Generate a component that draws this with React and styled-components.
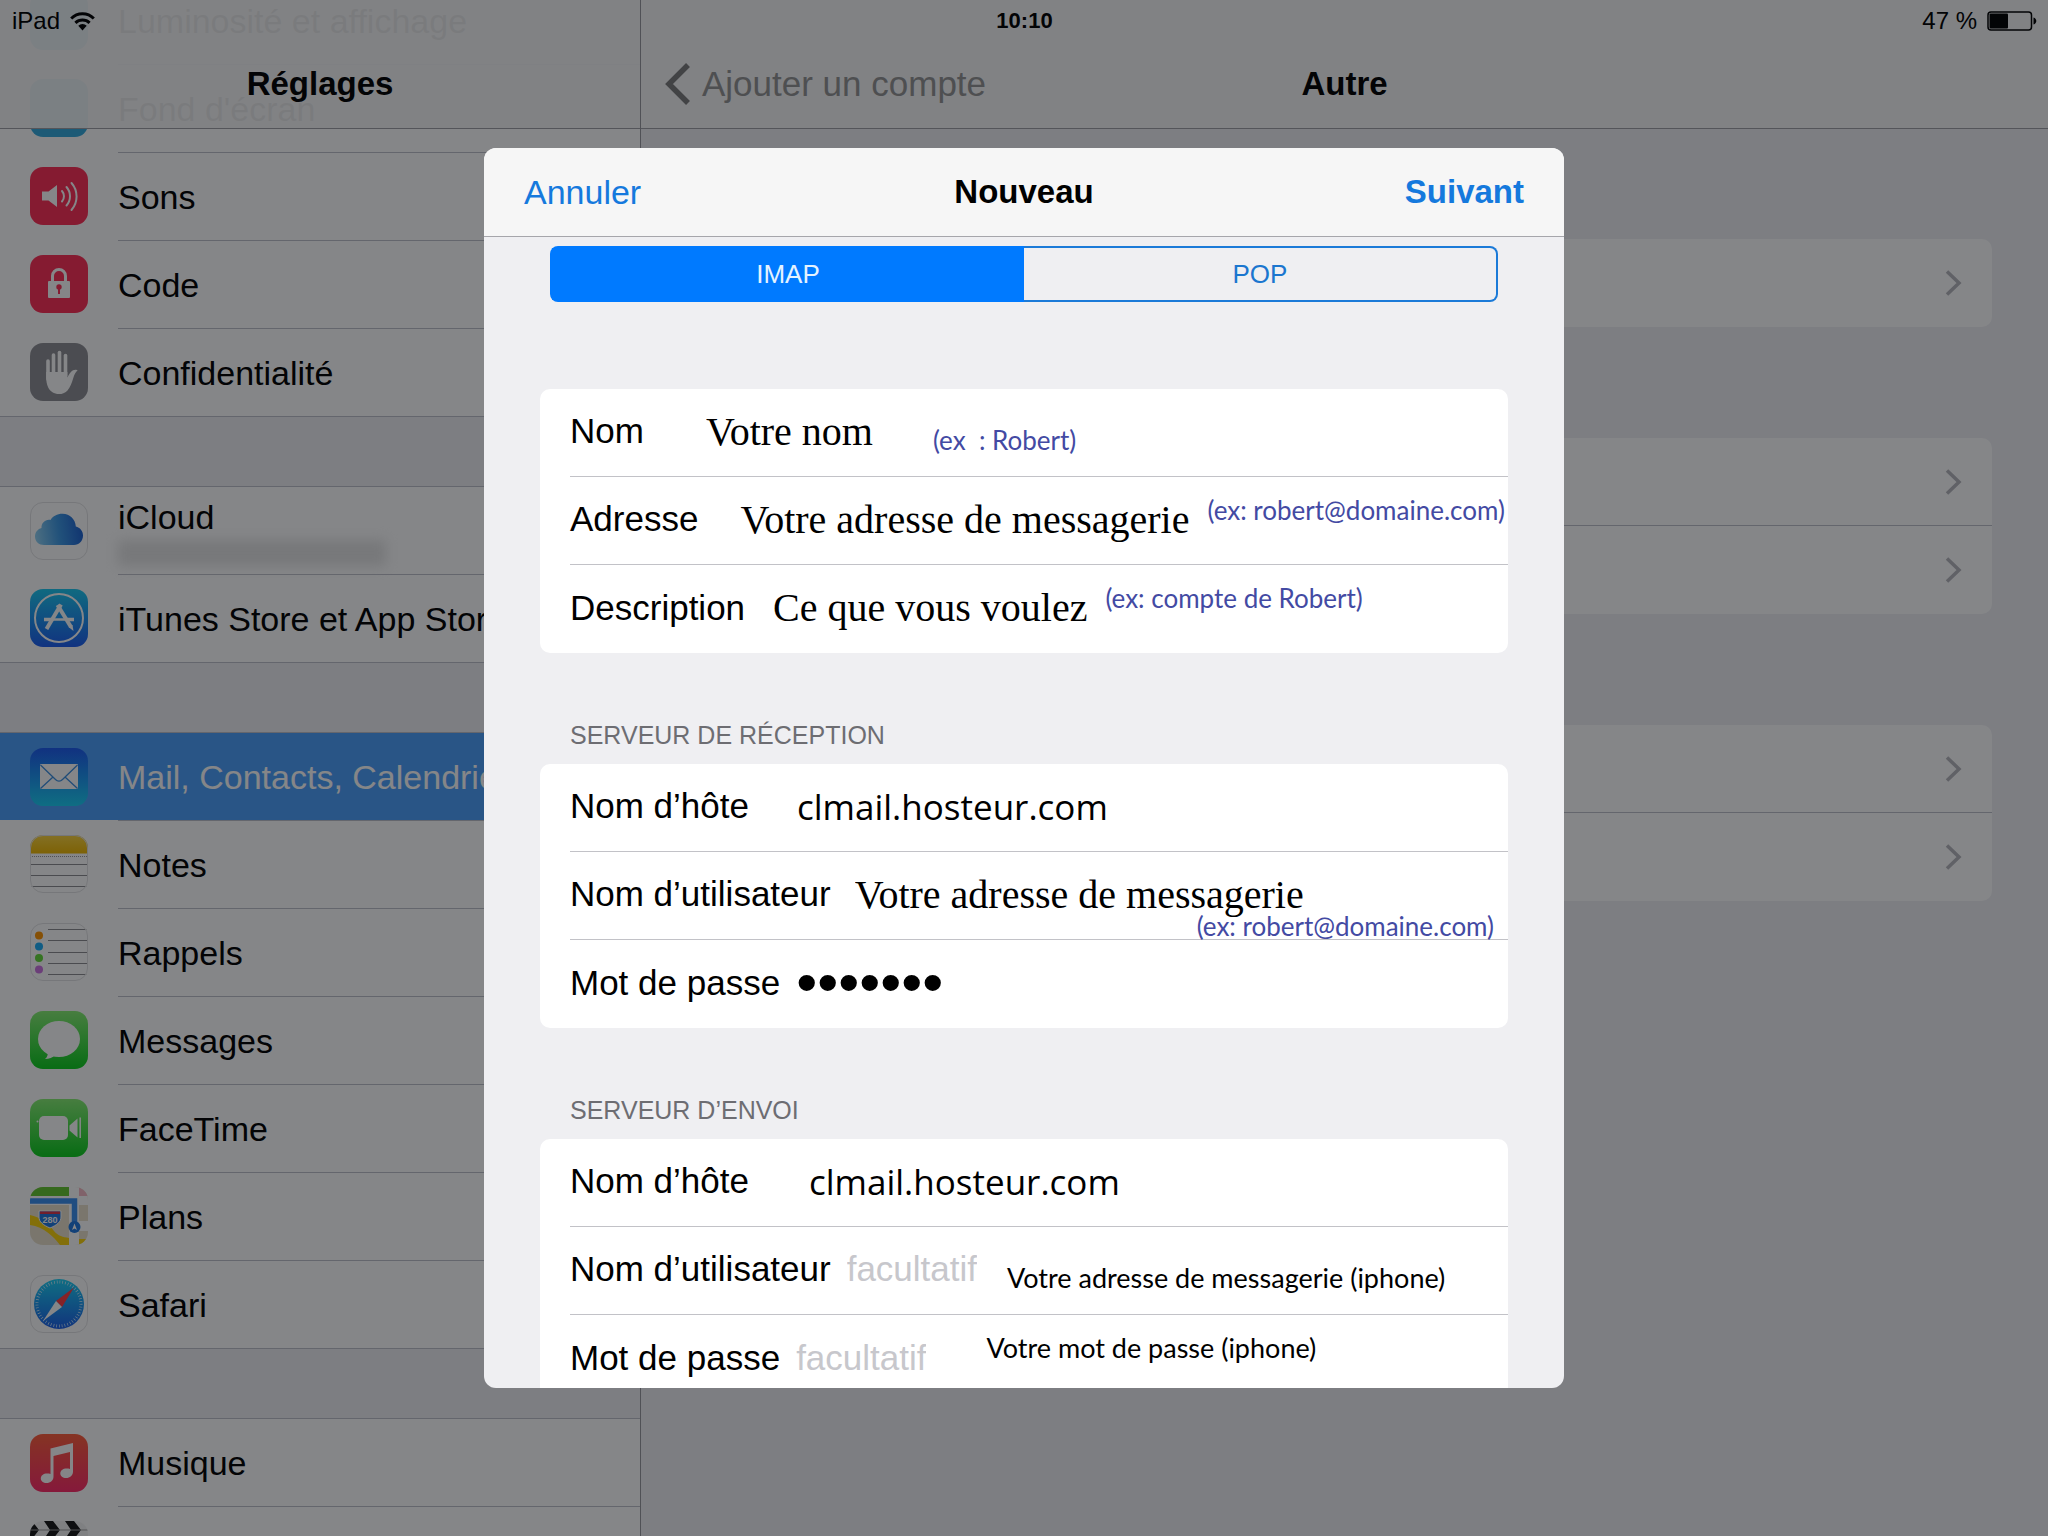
// App.jsx
import React, { useState } from 'react';
import styled, { createGlobalStyle, css } from 'styled-components';

const GlobalStyle = createGlobalStyle`
  *, *::before, *::after {
    box-sizing: border-box;
  }
  html, body {
    margin: 0;
    height: 100%;
    overflow: hidden;
    background: #efeff4;
    font-family: 'Liberation Sans', Arial, sans-serif;
  }
  ul {
    list-style: none;
    margin: 0;
    padding: 0;
  }
  button, input {
    font-family: inherit;
  }
`;

const Screen = styled.div`
  position: relative;
  display: grid;
  grid-template-columns: 31.25% 1fr;
  height: 100vh;
  overflow: hidden;
  color: #000;
`;

/* ---------- status bar ---------- */

const StatusBar = styled.div`
  position: absolute;
  top: 0;
  left: 0;
  right: 0;
  height: 42px;
  padding: 0 11px 0 12px;
  display: grid;
  grid-template-columns: 1fr auto 1fr;
  align-items: center;
  font-size: 24px;
  z-index: 2;
`;

const StatusSide = styled.div`
  display: flex;
  align-items: center;
  gap: 10px;
  white-space: pre;
  justify-content: ${props => (props.$end ? 'flex-end' : 'flex-start')};

  svg {
    display: block;
  }
`;

const Clock = styled.div`
  font-size: 22px;
  font-weight: 700;
`;

/* ---------- bars ---------- */

const NavBar = styled.header`
  height: 129px;
  padding: 40px 24px 0;
  display: grid;
  grid-template-columns: 1fr auto 1fr;
  align-items: center;
  border-bottom: 1px solid #a0a0a6;
  background: rgba(247, 247, 247, 0.95);

  h1 {
    grid-column: 2;
    margin: 0;
    font-size: 33px;
    font-weight: 700;
  }
`;

const FloatingNavBar = styled(NavBar)`
  position: absolute;
  top: 0;
  left: 0;
  right: 0;
  z-index: 1;
`;

const BackButton = styled.button`
  justify-self: start;
  display: flex;
  align-items: center;
  gap: 12px;
  padding: 0;
  border: 0;
  background: none;
  font-size: 35px;
  color: #949494;
`;

/* ---------- sidebar ---------- */

const Sidebar = styled.aside`
  position: relative;
  overflow: hidden;
`;

const SettingsList = styled.nav`
  margin-top: -24px;
`;

const Group = styled.ul`
  background: #fff;
  border-top: 1px solid #bfc0ca;
  border-bottom: 1px solid #bfc0ca;

  & + & {
    margin-top: 69px;
  }
`;

const SettingRow = styled.a`
  display: flex;
  align-items: stretch;
  height: 88px;
  padding-left: 30px;
  gap: 30px;
  color: ${props => (props.$active ? '#fff' : '#000')};
  background: ${props => (props.$active ? '#4c9ffb' : 'transparent')};
  font-size: 34px;
  text-decoration: none;
  white-space: nowrap;

  li:first-child > & {
    height: 87px;
  }

  svg {
    align-self: center;
    flex: none;
  }
`;

const SettingText = styled.span`
  flex: 1;
  display: flex;
  flex-direction: column;
  justify-content: center;
  padding-top: 2px;
  border-top: 1px solid #bfc0ca;

  li:first-child & {
    border-top: 0;
  }
`;

const HiddenAccount = styled.span`
  width: 268px;
  height: 26px;
  margin-top: 3px;
  background: #e4e4e4;
  filter: blur(6px);
`;

/* ---------- detail ---------- */

const Detail = styled.main`
  border-left: 1px solid #98989e;
`;

const DetailBody = styled.div`
  display: flex;
  flex-direction: column;
  gap: 111px;
  padding: 110px 56px;
`;

const DetailCard = styled.ul`
  background: #fff;
  border-radius: 10px;
`;

const DetailRow = styled.li`
  height: 88px;
  margin-left: 30px;
  padding-right: 30px;
  display: flex;
  align-items: center;
  justify-content: flex-end;
  border-bottom: 1px solid #bfc0ca;

  &:last-child {
    border-bottom: 0;
  }
`;

/* ---------- modal ---------- */

const Overlay = styled.div`
  position: absolute;
  inset: 0;
  z-index: 3;
  display: flex;
  justify-content: center;
  padding: 148px 24px;
  background: rgba(6, 8, 12, 0.49);
`;

const Modal = styled.section`
  display: flex;
  flex-direction: column;
  width: 100%;
  max-width: 1080px;
  overflow: hidden;
  border-radius: 12px;
  background: #efeff2;
`;

const ModalHeader = styled.header`
  flex: none;
  height: 89px;
  padding: 0 40px;
  display: grid;
  grid-template-columns: 1fr auto 1fr;
  align-items: center;
  background: #f6f6f6;
  border-bottom: 1px solid #a6a6ab;

  h2 {
    margin: 0;
    font-size: 33px;
    font-weight: 700;
  }
`;

const HeaderButton = styled.button`
  justify-self: ${props => (props.$primary ? 'end' : 'start')};
  padding: 0;
  border: 0;
  background: none;
  font-size: ${props => (props.$primary ? '33px' : '34px')};
  font-weight: ${props => (props.$primary ? 700 : 400)};
  color: #1579dd;
`;

const ModalBody = styled.form`
  flex: 1;
  min-height: 0;
  overflow: hidden;
  padding: 9px 56px 0;
`;

const Segmented = styled.div`
  display: grid;
  grid-template-columns: 1fr 1fr;
  height: 56px;
  margin: 0 10px 87px;
`;

const Segment = styled.button`
  padding: 0;
  border: 2px solid ${props => (props.$on ? '#007aff' : '#1b7ad8')};
  font-size: 26px;
  color: ${props => (props.$on ? '#e4f3ff' : '#1b76cf')};
  background: ${props => (props.$on ? '#007aff' : 'transparent')};

  &:first-child {
    border-right: 0;
    border-radius: 8px 0 0 8px;
  }

  &:last-child {
    border-left: 0;
    border-radius: 0 8px 8px 0;
  }
`;

const SectionTitle = styled.h3`
  display: flex;
  align-items: flex-end;
  height: 111px;
  margin: 0;
  padding: 0 30px 14px;
  font-size: 25px;
  line-height: 30px;
  font-weight: 400;
  color: #6d6d72;
`;

const Card = styled.div`
  overflow: hidden;
  border-radius: 10px;
  background: #fff;
`;

const FieldRow = styled.div`
  position: relative;
  display: flex;
  align-items: center;
  height: 88px;
  margin-left: 30px;
  padding-bottom: 3px;
  border-bottom: 1px solid #c2c2c7;
  white-space: nowrap;

  &:last-child {
    border-bottom: 0;
  }

  label {
    font-size: 35px;
  }
`;

const valueFonts = {
  serif: css`
    font-family: 'Liberation Serif', 'Times New Roman', serif;
    font-size: 40px;
  `,
  host: css`
    font-family: 'Open Sans', sans-serif;
    font-size: 35px;
  `,
  dots: css`
    font-size: 60px;
  `,
  plain: css`
    font-size: 35px;
  `,
};

const Field = styled.input`
  field-sizing: content;
  height: 72px;
  margin-left: ${props => props.$gap}px;
  padding: 0;
  border: 0;
  outline: 0;
  background: none;
  color: #000;
  ${props => valueFonts[props.$font]}

  &::placeholder {
    color: #c7c7cc;
    opacity: 1;
  }
`;

const notePlaces = {
  high: css`
    align-self: flex-start;
    padding-top: 18px;
  `,
  low: css`
    align-self: flex-end;
    padding-bottom: 18px;
  `,
  over: css`
    position: absolute;
    right: 14px;
    bottom: -2px;
  `,
};

const Note = styled.span`
  margin-left: ${props => props.$gap}px;
  font-family: Lato, 'Open Sans', sans-serif;
  font-size: ${props => (props.$dark ? '27px' : '26px')};
  line-height: 30px;
  color: ${props => (props.$dark ? '#000' : '#434aa3')};
  white-space: pre;
  ${props => notePlaces[props.$place]}
`;

/* ---------- icons ---------- */

const AppIcon = ({ id, from, to, border, children }) => (
  <svg width="58" height="58" viewBox="0 0 58 58" aria-hidden="true">
    <defs>
      <linearGradient id={`${id}-bg`} x1="0" y1="0" x2="0" y2="1">
        <stop offset="0" stopColor={from} />
        <stop offset="1" stopColor={to || from} />
      </linearGradient>
      <clipPath id={`${id}-clip`}>
        <rect width="58" height="58" rx="13" />
      </clipPath>
    </defs>
    <g clipPath={`url(#${id}-clip)`}>
      <rect width="58" height="58" fill={`url(#${id}-bg)`} />
      {children}
    </g>
    {border && <rect x="0.5" y="0.5" width="57" height="57" rx="12.5" fill="none" stroke="#e2e2e4" />}
  </svg>
);

const BrightnessIcon = () => <AppIcon id="brightness" from="#2aa5e5" />;

const WallpaperIcon = () => <AppIcon id="wallpaper" from="#34aadc" />;

const SoundIcon = () => (
  <AppIcon id="sound" from="#ff2d55">
    <path d="M12 24.500h6.500L27 18v22l-8.500-6.500H12z" fill="#fff" />
    <g fill="none" stroke="#fff" strokeWidth="2" strokeLinecap="round">
      <path d="M32 24a8 8 0 0 1 0 10.500" />
      <path d="M36.500 20a14 14 0 0 1 0 18.500" />
      <path d="M41.500 16a20.500 20.500 0 0 1 0 27" />
    </g>
  </AppIcon>
);

const LockIcon = () => (
  <AppIcon id="lock" from="#ff2d55">
    <path d="M22.500 27v-6a6.500 6.500 0 0 1 13 0v6" fill="none" stroke="#fff" strokeWidth="3" />
    <rect x="18" y="26" width="22" height="17" rx="1" fill="#fff" />
    <circle cx="29" cy="32" r="2.700" fill="#ff2d55" />
    <path d="M28 32h2v7h-2z" fill="#ff2d55" />
  </AppIcon>
);

const HandIcon = () => (
  <AppIcon id="hand" from="#8e8e93">
    <g stroke="#fff" strokeWidth="3.600" strokeLinecap="round">
      <path d="M18 18v18" />
      <path d="M23.500 12v20" />
      <path d="M29.500 9.500v22" />
      <path d="M35.500 12.500v20" />
    </g>
    <path
      d="M16.200 29h21.200v5.500c1.500-3 3.200-6 5.600-7.200 1.800-.9 4-.8 4.600.2-2 1.500-3.200 4-4.300 7.500-1.600 5-3 9.500-6 12.700-2.500 2.600-5 3.300-8.300 3.300-5 0-8.800-2.500-10.800-6.500-1.500-3.200-2-6.500-2-10z"
      fill="#fff"
    />
  </AppIcon>
);

const CloudIcon = () => (
  <AppIcon id="cloud" from="#fff" border>
    <defs>
      <linearGradient id="cloud-fill" x1="0" y1="0.600" x2="1" y2="0.500">
        <stop offset="0" stopColor="#8fd0f2" />
        <stop offset="0.500" stopColor="#3c98e4" />
        <stop offset="1" stopColor="#1b5fd0" />
      </linearGradient>
    </defs>
    <path
      d="M14 43C9 43 5 39.500 5 34.500c0-4.500 3-7.600 6.500-8.500-.3-5 4-9 9-8 2.500-4 7-6.300 12-6.200 7.500.2 13 5.700 13.300 12.700C50 25.500 53 29 53 33.500c0 5.500-4 9.500-9 9.500z"
      fill="url(#cloud-fill)"
    />
  </AppIcon>
);

const StoreIcon = () => (
  <AppIcon id="store" from="#1bc8ef" to="#1c5cf0">
    <g fill="none" stroke="#fff">
      <circle cx="29" cy="29" r="24" strokeWidth="2" />
      <path d="M31 15.500L16.500 40" strokeWidth="4" />
      <path d="M27.500 16l13.500 22" strokeWidth="4" />
      <path d="M14 30.500h8M36 30.500h8" strokeWidth="3.500" />
      <path d="M22 30.500h14" strokeWidth="2.500" />
    </g>
    <path d="M38.500 38l4-2 1 6z" fill="#fff" />
  </AppIcon>
);

const MailIcon = () => (
  <AppIcon id="mail" from="#1c5af0" to="#19d0f5">
    <rect x="10" y="16" width="38" height="25" rx="1" fill="#fff" />
    <g fill="none" stroke="#3c8fe0" strokeWidth="1.300">
      <path d="M10.500 17l15 14.500c2 2 5 2 7 0L47.500 17" />
      <path d="M10.500 40.500l12.500-11.500M47.500 40.500L35 29" />
    </g>
  </AppIcon>
);

const NotesIcon = () => (
  <AppIcon id="notes" from="#fff" border>
    <defs>
      <linearGradient id="notes-top" x1="0" y1="0" x2="0" y2="1">
        <stop offset="0" stopColor="#fcd53f" />
        <stop offset="1" stopColor="#f0b800" />
      </linearGradient>
    </defs>
    <rect width="58" height="18.500" fill="url(#notes-top)" />
    <path d="M0 21.500h58" stroke="#999" strokeDasharray="1 1" />
    <path d="M0 29.500h58M0 40.500h58M0 51.500h58" stroke="#8c8c90" />
  </AppIcon>
);

const RemindersIcon = () => (
  <AppIcon id="reminders" from="#fff" border>
    <circle cx="9" cy="12.500" r="4" fill="#ff9500" />
    <circle cx="9" cy="23.500" r="4" fill="#1badf8" />
    <circle cx="9" cy="35" r="4" fill="#63da38" />
    <circle cx="9" cy="46.500" r="4" fill="#cc73e1" />
    <path d="M18 6.500h40M18 17.500h40M18 29.500h40M18 40.500h40M18 51.500h40" stroke="#8c8c90" />
  </AppIcon>
);

const MessagesIcon = () => (
  <AppIcon id="messages" from="#86ee72" to="#0bcd1c">
    <ellipse cx="29" cy="28" rx="21" ry="18" fill="#fff" />
    <path d="M18 40c0 3.500-.5 6-3 8 4 0 8-1.500 10-4z" fill="#fff" />
  </AppIcon>
);

const FaceTimeIcon = () => (
  <AppIcon id="facetime" from="#86ee72" to="#0bcd1c">
    <rect x="9" y="17" width="29" height="24" rx="5" fill="#fff" />
    <path d="M39.500 26.500L47.500 19.500v19l-8-7z" fill="#fff" />
    <path d="M50.200 18.500v20.500" stroke="#fff" strokeWidth="1.500" />
    <circle cx="7.500" cy="22.500" r="1" fill="#fff" />
  </AppIcon>
);

const MapsIcon = () => (
  <AppIcon id="maps" from="#e9e0cb">
    <path d="M0 28c10 2 18 8 24 16 4 5 9 6 15 7v7H30C24 50 14 40 0 38z" fill="#fbd309" />
    <rect width="39" height="9" fill="#64c62f" />
    <rect y="9" width="58" height="9" fill="#fff" />
    <rect x="39" width="10" height="58" fill="#fff" />
    <rect x="49" width="9" height="9" fill="#f6b9c4" />
    <rect x="49" y="34" width="9" height="10" fill="#fff" />
    <rect x="49" y="52" width="9" height="6" fill="#fbd309" />
    <path d="M0 14h44.500v26" fill="none" stroke="#3a8ff0" strokeWidth="5.500" />
    <path d="M9 24h22v6c0 5-4 8-11 11-7-3-11-6-11-11z" fill="#1f78e0" stroke="#fff" strokeWidth="1" />
    <path d="M10 24.500h20v2.500H10z" fill="#d9364c" />
    <text x="20" y="35.500" fontSize="9" fontWeight="700" fill="#fff" textAnchor="middle">
      280
    </text>
    <circle cx="44.500" cy="40" r="6" fill="#1f78e0" />
    <path d="M44.500 36.500l2.500 6.500-2.500-1.500-2.500 1.500z" fill="#fff" />
  </AppIcon>
);

const SafariIcon = () => (
  <AppIcon id="safari" from="#fff" border>
    <defs>
      <linearGradient id="safari-dial" x1="0" y1="0" x2="0" y2="1">
        <stop offset="0" stopColor="#19d0f5" />
        <stop offset="1" stopColor="#1d5fe8" />
      </linearGradient>
    </defs>
    <circle cx="29" cy="29" r="25" fill="url(#safari-dial)" />
    <circle cx="29" cy="29" r="22" fill="none" stroke="#d8f0ff" strokeWidth="3" strokeDasharray="0.700 2.100" />
    <path d="M44 12.500L26 26l6 6z" fill="#ff3b41" />
    <path d="M13 46l13-20 6 6z" fill="#fff" />
  </AppIcon>
);

const MusicIcon = () => (
  <AppIcon id="music" from="#ff5e3a" to="#ff2a68">
    <path
      d="M20.500 14.500L43 9v28.500c0 4-3 6.500-7 6.500-3.300 0-5.700-1.800-5.700-4.500 0-3 2.700-5 6.200-5 1.500 0 2.500.1 3.500.4V18l-16.500 4v20.500c0 4-3 6.500-7 6.500-3.300 0-5.700-1.800-5.700-4.500 0-3 2.700-5 6.200-5 1.500 0 2.500.1 3.500.4z"
      fill="#fff"
    />
  </AppIcon>
);

const VideosIcon = () => (
  <AppIcon id="videos" from="#f4f4f4">
    {[7, 28, 49, 70].map(x => (
      <path key={x} d={`M${x - 14} 0h9l7 9-7 9h-9l6-9z`} fill="#161616" />
    ))}
    <path d="M0 9h58" stroke="#999" />
    <rect y="18" width="58" height="40" fill="#161616" />
  </AppIcon>
);

const WifiIcon = () => (
  <svg width="25" height="19" viewBox="0 0 25 19" aria-hidden="true">
    <g fill="none" stroke="#000" strokeWidth="3">
      <path d="M1.200 6.500a16 16 0 0 1 22.600 0" />
      <path d="M5.400 10.800a10.200 10.200 0 0 1 14.200 0" />
    </g>
    <path d="M12.500 18.500l-4.200-4.700a6 6 0 0 1 8.400 0z" fill="#000" />
  </svg>
);

const BatteryIcon = () => (
  <svg width="50" height="20" viewBox="0 0 50 20" aria-hidden="true">
    <rect x="1" y="1" width="43.500" height="18" rx="3" fill="none" stroke="#000" strokeWidth="1.500" />
    <rect x="2.500" y="2.500" width="18.500" height="15" rx="1" fill="#000" />
    <path d="M46.500 6.500c2 .6 2.800 2 2.800 3.500s-.8 2.900-2.800 3.500z" fill="#000" />
  </svg>
);

const BackChevron = () => (
  <svg width="25" height="42" viewBox="0 0 25 42" aria-hidden="true">
    <path d="M23 2L4 21l19 19" fill="none" stroke="#7d7d7d" strokeWidth="5.500" />
  </svg>
);

const RowChevron = () => (
  <svg width="17" height="26" viewBox="0 0 17 26" aria-hidden="true">
    <path d="M2 1.500L14 13 2 24.500" fill="none" stroke="#b6b6bd" strokeWidth="3.500" />
  </svg>
);

/* ---------- data ---------- */

const settings = [
  [
    { label: 'Luminosité et affichage', icon: BrightnessIcon },
    { label: "Fond d'écran", icon: WallpaperIcon },
    { label: 'Sons', icon: SoundIcon },
    { label: 'Code', icon: LockIcon },
    { label: 'Confidentialité', icon: HandIcon },
  ],
  [
    { label: 'iCloud', icon: CloudIcon, account: true },
    { label: 'iTunes Store et App Store', icon: StoreIcon },
  ],
  [
    { label: 'Mail, Contacts, Calendriers', icon: MailIcon, active: true },
    { label: 'Notes', icon: NotesIcon },
    { label: 'Rappels', icon: RemindersIcon },
    { label: 'Messages', icon: MessagesIcon },
    { label: 'FaceTime', icon: FaceTimeIcon },
    { label: 'Plans', icon: MapsIcon },
    { label: 'Safari', icon: SafariIcon },
  ],
  [
    { label: 'Musique', icon: MusicIcon },
    { label: '', icon: VideosIcon },
  ],
];

const sections = [
  {
    fields: [
      { id: 'name', label: 'Nom', value: 'Votre nom', font: 'serif', gap: 62, note: '(ex  : Robert)', place: 'low', noteGap: 60 },
      { id: 'address', label: 'Adresse', value: 'Votre adresse de messagerie', font: 'serif', gap: 42, note: '(ex: robert@domaine.com)', place: 'high', noteGap: 18 },
      { id: 'description', label: 'Description', value: 'Ce que vous voulez', font: 'serif', gap: 28, note: '(ex: compte de Robert)', place: 'high', noteGap: 18 },
    ],
  },
  {
    title: 'SERVEUR DE RÉCEPTION',
    fields: [
      { id: 'in-host', label: 'Nom d’hôte', value: 'clmail.hosteur.com', font: 'host', gap: 48 },
      { id: 'in-user', label: 'Nom d’utilisateur', value: 'Votre adresse de messagerie', font: 'serif', gap: 24, note: '(ex: robert@domaine.com)', place: 'over' },
      { id: 'in-pass', label: 'Mot de passe', value: 'robert1', type: 'password', font: 'dots', gap: 16 },
    ],
  },
  {
    title: 'SERVEUR D’ENVOI',
    fields: [
      { id: 'out-host', label: 'Nom d’hôte', value: 'clmail.hosteur.com', font: 'host', gap: 60 },
      { id: 'out-user', label: 'Nom d’utilisateur', placeholder: 'facultatif', font: 'plain', gap: 16, note: 'Votre adresse de messagerie (iphone)', place: 'low', noteGap: 30, dark: true },
      { id: 'out-pass', label: 'Mot de passe', type: 'password', placeholder: 'facultatif', font: 'plain', gap: 16, note: 'Votre mot de passe (iphone)', place: 'high', noteGap: 60, dark: true },
    ],
  },
];

const detailCards = [1, 2, 2];

const App = () => {
  const [protocol, setProtocol] = useState('IMAP');

  return (
    <>
      <GlobalStyle />
      <Screen>
        <StatusBar>
          <StatusSide>
            iPad
            <WifiIcon />
          </StatusSide>
          <Clock>10:10</Clock>
          <StatusSide $end>
            47 %
            <BatteryIcon />
          </StatusSide>
        </StatusBar>

        <Sidebar>
          <FloatingNavBar>
            <h1>Réglages</h1>
          </FloatingNavBar>
          <SettingsList>
            {settings.map((group, index) => (
              <Group key={index}>
                {group.map(({ label, icon: Icon, account, active }) => (
                  <li key={label}>
                    <SettingRow href="#" $active={active}>
                      <Icon />
                      <SettingText>
                        {label}
                        {account && <HiddenAccount />}
                      </SettingText>
                    </SettingRow>
                  </li>
                ))}
              </Group>
            ))}
          </SettingsList>
        </Sidebar>

        <Detail>
          <NavBar>
            <BackButton type="button">
              <BackChevron />
              Ajouter un compte
            </BackButton>
            <h1>Autre</h1>
          </NavBar>
          <DetailBody>
            {detailCards.map((count, index) => (
              <DetailCard key={index}>
                {Array.from({ length: count }, (_, row) => (
                  <DetailRow key={row}>
                    <RowChevron />
                  </DetailRow>
                ))}
              </DetailCard>
            ))}
          </DetailBody>
        </Detail>

        <Overlay>
          <Modal role="dialog" aria-labelledby="modal-title">
            <ModalHeader>
              <HeaderButton type="button">Annuler</HeaderButton>
              <h2 id="modal-title">Nouveau</h2>
              <HeaderButton type="button" $primary>Suivant</HeaderButton>
            </ModalHeader>
            <ModalBody>
              <Segmented>
                {['IMAP', 'POP'].map(name => (
                  <Segment
                    key={name}
                    type="button"
                    aria-pressed={protocol === name}
                    $on={protocol === name}
                    onClick={() => setProtocol(name)}
                  >
                    {name}
                  </Segment>
                ))}
              </Segmented>
              {sections.map((section, index) => (
                <React.Fragment key={index}>
                  {section.title && <SectionTitle>{section.title}</SectionTitle>}
                  <Card>
                    {section.fields.map(field => (
                      <FieldRow key={field.id}>
                        <label htmlFor={field.id}>{field.label}</label>
                        <Field
                          id={field.id}
                          type={field.type || 'text'}
                          defaultValue={field.value}
                          placeholder={field.placeholder}
                          autoComplete="off"
                          $font={field.font}
                          $gap={field.gap}
                        />
                        {field.note && (
                          <Note $place={field.place} $gap={field.noteGap || 0} $dark={field.dark}>
                            {field.note}
                          </Note>
                        )}
                      </FieldRow>
                    ))}
                  </Card>
                </React.Fragment>
              ))}
            </ModalBody>
          </Modal>
        </Overlay>
      </Screen>
    </>
  );
};

export default App;
